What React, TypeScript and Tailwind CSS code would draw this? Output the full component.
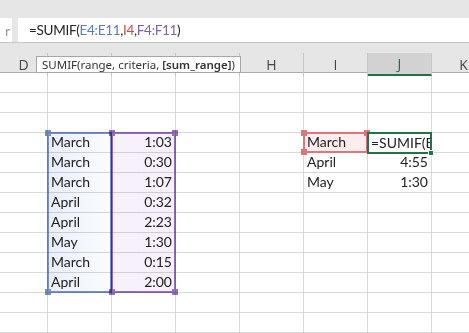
const cols = [
  { key: "D", label: "D" },
  { key: "E", label: "" },
  { key: "F", label: "" },
  { key: "G", label: "" },
  { key: "H", label: "H" },
  { key: "I", label: "I" },
  { key: "J", label: "J" },
  { key: "K", label: "K" },
];

const rangeRows = [
  ["March", "1:03"],
  ["March", "0:30"],
  ["March", "1:07"],
  ["April", "0:32"],
  ["April", "2:23"],
  ["May", "1:30"],
  ["March", "0:15"],
  ["April", "2:00"],
];

const cellFont = { fontFamily: "Lato, 'Liberation Sans', sans-serif" };

function Handle({ className }: { className: string }) {
  return <div className={"absolute h-[6px] w-[6px] " + className} />;
}

function cellText(row: number, col: string) {
  // the data starts on the fourth visible row
  const r = row - 3;
  if (col === "E" && r >= 0 && r < 8) return { text: rangeRows[r][0], right: false };
  if (col === "F" && r >= 0 && r < 8) return { text: rangeRows[r][1], right: true };
  if (col === "I" && r === 1) return { text: "April", right: false };
  if (col === "I" && r === 2) return { text: "May", right: false };
  if (col === "J" && r === 1) return { text: "4:55", right: true };
  if (col === "J" && r === 2) return { text: "1:30", right: true };
  return null;
}

const gridCols = "grid-cols-[48px_repeat(7,64px)] grid-rows-[repeat(13,20px)]";

export default function App() {
  return (
    <div className="h-[333px] w-[469px] overflow-hidden bg-white">
      <div className="h-[18px] bg-[#e6e6e6]" />

      {/* formula bar */}
      <div className="flex h-[25px] gap-[6px] border-b border-[#c6c6c6] bg-[#e6e6e6]">
        <div className="flex w-[12px] items-center justify-end bg-white pr-[2px] text-[14px] text-[#9a9a9a]" style={cellFont}>
          r
        </div>
        <div className="flex flex-1 items-center bg-white pl-[11px] text-[13.5px] tracking-[-0.3px] text-[#222]" style={cellFont}>
          <span>=SUMIF(</span>
          <span className="text-[#5b7cc4]">E4:E11</span>
          <span>,</span>
          <span className="text-[#c0504d]">I4</span>
          <span>,</span>
          <span className="text-[#8064a2]">F4:F11</span>
          <span>)</span>
        </div>
      </div>

      {/* column headers */}
      <div className="relative pt-[10px] bg-[#e6e6e6]">
        <div className={"grid h-[20px] border-b border-[#ababab] text-[14px] text-[#444] grid-cols-[48px_repeat(7,64px)]"} style={{ fontFamily: "'Open Sans', 'Noto Sans', sans-serif" }}>
          {cols.map((c) => (
            <div
              key={c.key}
              className={
                "flex items-center justify-center border-r border-[#c6c6c6] " +
                (c.key === "J" ? "border-b-2 border-b-[#217346] bg-[#d2d2d2] text-[#1e6b41]" : "")
              }
            >
              {c.label}
            </div>
          ))}
        </div>

        {/* function tooltip */}
        <div
          className="absolute left-[36px] top-[13px] flex h-[17px] items-center border border-[#a6a6a6] bg-white px-[5px] text-[11.5px] text-[#333]"
          style={{ fontFamily: "'Noto Sans', 'Open Sans', sans-serif" }}
        >
          SUMIF(range, criteria,&nbsp;<b className="font-semibold">[sum_range]</b>)
        </div>
      </div>

      {/* sheet: cell grid with the reference highlights layered on top */}
      <div className="grid">
        <div className={"grid [grid-area:1/1] " + gridCols}>
          {Array.from({ length: 13 }).flatMap((_, row) =>
            cols.map((c) => {
              const t = cellText(row, c.key);
              return (
                <div
                  key={row + c.key}
                  style={cellFont}
                  className={
                    "flex items-end whitespace-nowrap border-b border-r border-[#d9d9d9] px-[3px] pb-[1px] text-[14px] leading-[18px] text-[#222] " +
                    (t?.right ? "justify-end" : "justify-start")
                  }
                >
                  {t?.text}
                </div>
              );
            })
          )}
        </div>

        <div className={"grid [grid-area:1/1] " + gridCols}>
          {/* E4:E11 */}
          <div className="relative col-start-2 row-start-4 row-span-8 -ml-[1px] -mt-[1px] border-2 border-[#7890c8] bg-gradient-to-r from-[#e3eaf9]/80 to-[#f6f8fd]/40 mix-blend-multiply">
            <Handle className="-left-[4px] -top-[4px] bg-[#7890c8]" />
            <Handle className="-bottom-[4px] -left-[4px] bg-[#7890c8]" />
          </div>
          {/* F4:F11 */}
          <div className="relative col-start-3 row-start-4 row-span-8 -ml-[1px] -mt-[1px] border-2 border-[#9270ba] bg-gradient-to-r from-[#f4eefa]/80 to-[#efe6f7]/60 mix-blend-multiply">
            <Handle className="-left-[4px] -top-[4px] bg-[#9270ba]" />
            <Handle className="-bottom-[4px] -left-[4px] bg-[#9270ba]" />
            <Handle className="-right-[4px] -top-[4px] bg-[#9270ba]" />
            <Handle className="-bottom-[4px] -right-[4px] bg-[#9270ba]" />
          </div>
          {/* I4 criteria */}
          <div
            className="relative col-start-6 row-start-4 -ml-[1px] -mt-[1px] flex items-end border-2 border-[#d9777b] bg-[#fbe6e6]/70 pl-[2px] text-[14px] leading-[18px] text-[#222]"
            style={cellFont}
          >
            March
            <Handle className="-left-[4px] -top-[4px] bg-[#d9777b]" />
            <Handle className="-bottom-[4px] -left-[4px] bg-[#d9777b]" />
            <Handle className="-right-[4px] -top-[4px] bg-[#d9777b]" />
          </div>
          {/* J4 active cell */}
          <div
            className="relative col-start-7 row-start-4 -m-[1px] -mr-[0px] flex items-end border-2 border-[#217346] bg-white pl-[2px] text-[14px] leading-[18px] text-[#222]"
            style={cellFont}
          >
            <span className="overflow-hidden whitespace-nowrap">=SUMIF(E4:E11,I4,F4:F11)</span>
            <div className="absolute -bottom-[4px] -right-[4px] h-[6px] w-[6px] border border-white bg-[#217346]" />
          </div>
        </div>
      </div>
    </div>
  );
}
